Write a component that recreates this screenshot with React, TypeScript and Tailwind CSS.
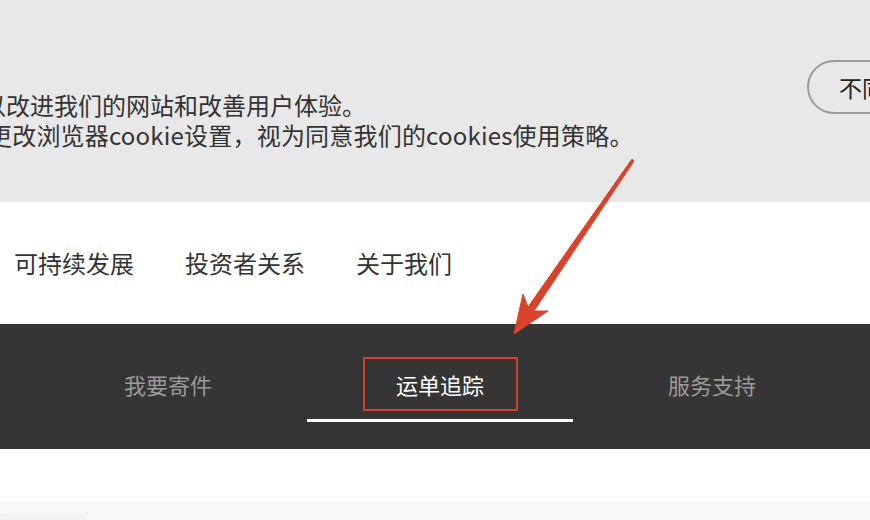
const cjk = { fontFamily: '"Microsoft YaHei", "Noto Sans CJK SC", "Noto Sans", sans-serif' }

const navItems = ['可持续发展', '投资者关系', '关于我们']
const tabs = ['我要寄件', '运单追踪', '服务支持']

function Arrow() {
  // annotation arrow drawn over the page
  return (
    <svg
      className="pointer-events-none absolute left-0 top-0"
      width="870"
      height="520"
      viewBox="0 0 870 520"
    >
      <polygon
        points="514,334 548,311 534,311 634,161 632,159 528,307 523,294"
        fill="#d9432b"
        stroke="#d9432b"
        strokeWidth="1"
        strokeLinejoin="round"
      />
    </svg>
  )
}

export default function App() {
  const active = 1

  return (
    <div className="relative h-[520px] w-[870px] overflow-hidden bg-white" style={cjk}>
      {/* cookie banner */}
      <div className="flex h-[202px] items-start justify-between bg-[#e8e8e8]">
        <div className="mt-[90px] text-[24px] leading-[30px] text-[#333]">
          <p className="-ml-[18px] whitespace-nowrap">以改进我们的网站和改善用户体验。</p>
          <p className="-ml-[12px] whitespace-nowrap tracking-[0.2px]">更改浏览器cookie设置，视为同意我们的cookies使用策略。</p>
        </div>
        <button className="-mr-[70px] mt-[60px] flex h-[54px] shrink-0 items-center rounded-full border-2 border-[#9a9a9a] pl-[30px] pr-[30px] text-[23px] text-[#222]">
          不同意
        </button>
      </div>

      {/* main nav */}
      <nav className="flex h-[122px] items-center gap-[51px] pl-[14px]">
        {navItems.map((item) => (
          <span key={item} className="text-[24px] text-[#333]">
            {item}
          </span>
        ))}
      </nav>

      {/* tabs bar */}
      <div className="flex h-[125px] bg-[#353535] pl-[32px]">
        {tabs.map((tab, i) => (
          <div key={tab} className="flex w-[272px] flex-col items-center pt-[33px]">
            <div
              className={
                i === active
                  ? 'flex h-[54px] w-[155px] items-center justify-center border-2 border-[#d2412c] text-[22px] text-white'
                  : 'flex h-[54px] w-[155px] items-center justify-center text-[22px] text-[#9b9b9b]'
              }
            >
              {tab}
            </div>
            <div className={i === active ? 'mt-[8px] h-[3px] w-[266px] bg-white' : 'mt-[8px] h-[3px] w-[266px]'} />
          </div>
        ))}
      </div>

      {/* content below */}
      <div className="h-[52px] bg-white" />
      <div className="h-[40px] bg-[#f8f8f8] pt-[15px]">
        <div className="h-[20px] w-[84px] bg-[#f3f3f3] shadow-[0_0_4px_rgba(0,0,0,0.08)]" />
      </div>

      <Arrow />
    </div>
  )
}
